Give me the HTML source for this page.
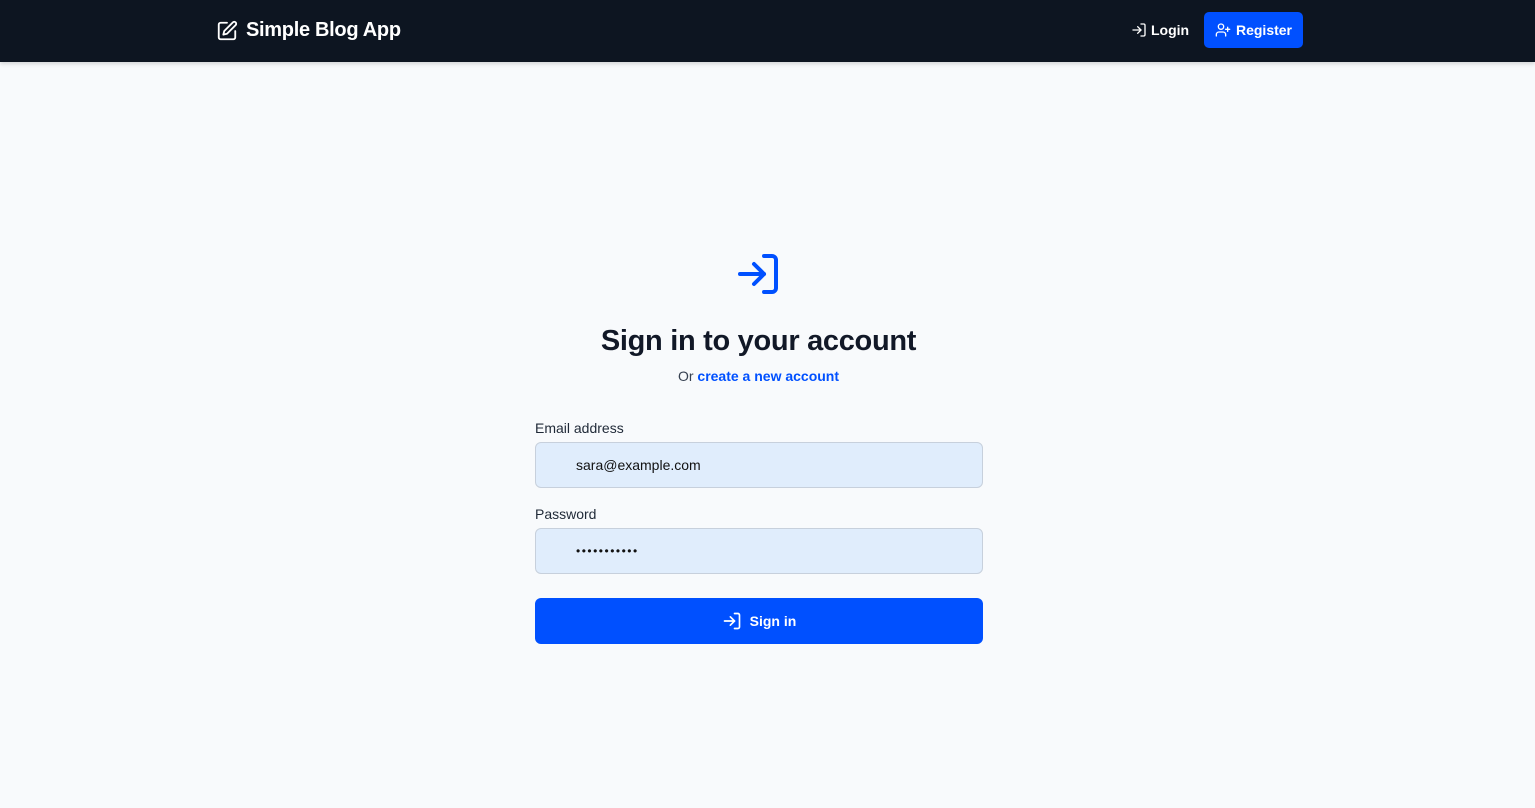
<!DOCTYPE html>
<html><head><meta charset="utf-8"><style>
*{box-sizing:border-box;margin:0;padding:0}
body{width:1535px;height:808px;background:#f8fafc;font-family:"Liberation Sans",Arial,sans-serif;position:relative;overflow:hidden}
.nav{position:absolute;left:0;top:0;width:1535px;height:62px;background:#0d1521;box-shadow:0 2px 4px rgba(0,0,0,.15)}
.brand{position:absolute;left:216px;top:19px;color:#fff;font-weight:bold;font-size:20px;display:flex;align-items:center;gap:8px;letter-spacing:-0.3px}
.login{position:absolute;left:1131px;top:22px;color:#fff;font-weight:bold;font-size:14px;display:flex;align-items:center;gap:4px}
.reg{position:absolute;left:1204px;top:12px;width:99px;height:36px;background:#0050ff;border-radius:5px;color:#fff;font-weight:bold;font-size:14px;display:flex;align-items:center;justify-content:center;gap:5px}
h1{position:absolute;left:0;width:1517px;top:325px;text-align:center;font-size:29px;color:#111827;letter-spacing:-0.3px}
.sub{position:absolute;left:0;width:1517px;top:368px;text-align:center;font-size:14px;color:#374151}
.sub b{color:#0050ff}
label{position:absolute;left:535px;font-size:14px;color:#1f2937}
.inp{position:absolute;left:535px;width:448px;height:46px;background:#e0edfc;border:1px solid #c7d0dc;border-radius:6px;padding-left:40px;font-size:14px;color:#111;display:flex;align-items:center}
.btn{position:absolute;left:535px;top:598px;width:448px;height:46px;background:#0050ff;border-radius:6px;color:#fff;font-weight:bold;font-size:14px;display:flex;align-items:center;justify-content:center;gap:8px}
</style></head><body>
<div class="nav">
<div class="brand"><svg width="22" height="22" viewBox="0 0 24 24" fill="none" stroke="#fff" stroke-width="2" stroke-linecap="round" stroke-linejoin="round"><path d="M12 3H5a2 2 0 0 0-2 2v14a2 2 0 0 0 2 2h14a2 2 0 0 0 2-2v-7"/><path d="M18.4 2.6a2.1 2.1 0 0 1 3 3L12 15l-4 1 1-4z"/></svg>Simple Blog App</div>
<div class="login"><svg width="16" height="16" viewBox="0 0 24 24" fill="none" stroke="#fff" stroke-width="2" stroke-linecap="round" stroke-linejoin="round"><path d="M15 3h4a2 2 0 0 1 2 2v14a2 2 0 0 1-2 2h-4"/><polyline points="10 17 15 12 10 7"/><line x1="15" y1="12" x2="3" y2="12"/></svg>Login</div>
<div class="reg"><svg width="16" height="16" viewBox="0 0 24 24" fill="none" stroke="#fff" stroke-width="2" stroke-linecap="round" stroke-linejoin="round"><path d="M16 21v-2a4 4 0 0 0-4-4H6a4 4 0 0 0-4 4v2"/><circle cx="9" cy="7" r="4"/><line x1="19" y1="8" x2="19" y2="14"/><line x1="22" y1="11" x2="16" y2="11"/></svg>Register</div>
</div>
<svg style="position:absolute;left:734px;top:250px" width="48" height="48" viewBox="0 0 24 24" fill="none" stroke="#0050ff" stroke-width="2" stroke-linecap="round" stroke-linejoin="round"><path d="M15 3h4a2 2 0 0 1 2 2v14a2 2 0 0 1-2 2h-4"/><polyline points="10 17 15 12 10 7"/><line x1="15" y1="12" x2="3" y2="12"/></svg>
<h1>Sign in to your account</h1>
<div class="sub">Or <b>create a new account</b></div>
<label style="top:420px">Email address</label>
<div class="inp" style="top:442px">sara@example.com</div>
<label style="top:506px">Password</label>
<div class="inp" style="top:528px;font-size:12px;letter-spacing:1.5px">•••••••••••</div>
<div class="btn"><svg width="20" height="20" viewBox="0 0 24 24" fill="none" stroke="#fff" stroke-width="2" stroke-linecap="round" stroke-linejoin="round"><path d="M15 3h4a2 2 0 0 1 2 2v14a2 2 0 0 1-2 2h-4"/><polyline points="10 17 15 12 10 7"/><line x1="15" y1="12" x2="3" y2="12"/></svg>Sign in</div>
</body></html>
